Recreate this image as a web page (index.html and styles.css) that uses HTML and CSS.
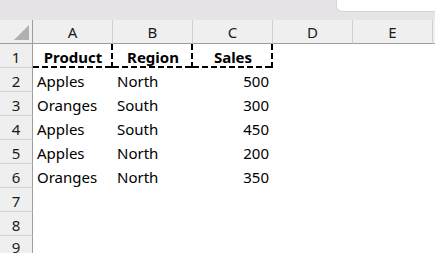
FILE: index.html
```html
<!DOCTYPE html>
<html>
<head>
<meta charset="utf-8">
<link rel="stylesheet" href="styles.css">
</head>
<body>
<div class="topbar"><div class="namebox"></div></div>
<div class="sheet">
  <div class="corner"><span class="tri"></span></div>
  <div class="colhead">A</div>
  <div class="colhead">B</div>
  <div class="colhead">C</div>
  <div class="colhead">D</div>
  <div class="colhead">E</div>
  <div class="colhead rest"></div>

  <div class="rowhead">1</div>
  <div class="cell bold center ants">Product</div>
  <div class="cell bold center ants">Region</div>
  <div class="cell bold center ants">Sales</div>
  <div class="cell"></div><div class="cell"></div><div class="cell"></div>

  <div class="rowhead">2</div>
  <div class="cell">Apples</div><div class="cell">North</div><div class="cell num">500</div>
  <div class="cell"></div><div class="cell"></div><div class="cell"></div>

  <div class="rowhead">3</div>
  <div class="cell">Oranges</div><div class="cell">South</div><div class="cell num">300</div>
  <div class="cell"></div><div class="cell"></div><div class="cell"></div>

  <div class="rowhead">4</div>
  <div class="cell">Apples</div><div class="cell">South</div><div class="cell num">450</div>
  <div class="cell"></div><div class="cell"></div><div class="cell"></div>

  <div class="rowhead">5</div>
  <div class="cell">Apples</div><div class="cell">North</div><div class="cell num">200</div>
  <div class="cell"></div><div class="cell"></div><div class="cell"></div>

  <div class="rowhead">6</div>
  <div class="cell">Oranges</div><div class="cell">North</div><div class="cell num">350</div>
  <div class="cell"></div><div class="cell"></div><div class="cell"></div>

  <div class="rowhead">7</div>
  <div class="cell"></div><div class="cell"></div><div class="cell"></div>
  <div class="cell"></div><div class="cell"></div><div class="cell"></div>

  <div class="rowhead">8</div>
  <div class="cell"></div><div class="cell"></div><div class="cell"></div>
  <div class="cell"></div><div class="cell"></div><div class="cell"></div>

  <div class="rowhead last">9</div>
  <div class="cell"></div><div class="cell"></div><div class="cell"></div>
  <div class="cell"></div><div class="cell"></div><div class="cell"></div>
</div>
</body>
</html>
```
FILE: styles.css
```css
html, body {
  margin: 0;
  padding: 0;
  background: #ffffff;
  overflow: hidden;
}
body {
  width: 435px;
  height: 253px;
  font-family: "Noto Sans", "Open Sans", sans-serif;
  font-size: 15px;
  color: #000;
}
.topbar {
  height: 20px;
  background: #e6e4e6;
  display: flex;
  justify-content: flex-end;
  align-items: flex-start;
}
.namebox {
  width: 98px;
  height: 11px;
  background: #ffffff;
  border-left: 1px solid #d6d4d6;
  border-bottom: 1px solid #d6d4d6;
  border-bottom-left-radius: 6px;
}
.sheet {
  display: grid;
  grid-template-columns: 33px repeat(5, 80px) 1fr;
  grid-auto-rows: 24px;
}
.corner {
  background: #efefef;
  border-right: 1px solid #9e9e9e;
  border-bottom: 1px solid #9e9e9e;
  box-sizing: border-box;
  display: flex;
  justify-content: flex-end;
  align-items: flex-end;
  padding: 0 3px 3px 0;
}
.tri {
  width: 0;
  height: 0;
  border-left: 15px solid transparent;
  border-bottom: 15px solid #b0b0b0;
}
.colhead {
  background: #efefef;
  border-right: 1px solid #cfcfcf;
  border-bottom: 1px solid #9e9e9e;
  box-sizing: border-box;
  display: flex;
  align-items: center;
  justify-content: center;
  color: #1a1a1a;
  font-size: 15px;
  padding-top: 1px;
}
.colhead.rest {
  border-right: none;
}
.rowhead {
  background: #efefef;
  border-right: 1px solid #9e9e9e;
  border-bottom: 1px solid #d2d2d2;
  box-sizing: border-box;
  display: flex;
  align-items: center;
  justify-content: center;
  color: #1a1a1a;
  padding-top: 2px;
}
.rowhead.last {
  align-items: flex-start;
  padding-top: 1px;
}
.cell {
  display: flex;
  align-items: center;
  padding: 2px 4px 0;
  white-space: nowrap;
  overflow: hidden;
  box-sizing: border-box;
}
.bold {
  font-weight: bold;
}
.center {
  justify-content: center;
}
.num {
  justify-content: flex-end;
}
.ants {
  background-image:
    repeating-linear-gradient(to right, #000 0 6px, transparent 6px 9px),
    repeating-linear-gradient(to bottom, #000 0 6px, transparent 6px 9px);
  background-size: 100% 2px, 2px 100%;
  background-position: left bottom, right top;
  background-repeat: no-repeat;
  overflow: visible;
}
```
